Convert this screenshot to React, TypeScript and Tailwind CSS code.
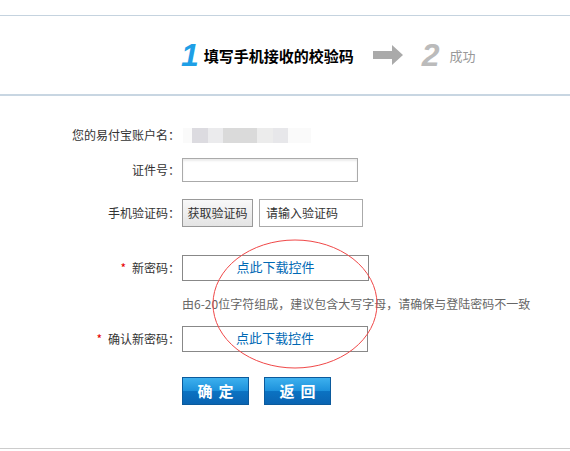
import React from "react";

const cjk = { fontFamily: '"Noto Sans CJK SC", "Noto Sans", sans-serif' };

function Label({ children, star }: { children: React.ReactNode; star?: boolean }) {
  return (
    <div className="w-[180px] shrink-0 text-right text-[12px] leading-[16px] text-[#333]">
      {star && <span className="mr-[6px] text-[#e60000]">*</span>}
      {children}
    </div>
  );
}

export default function App() {
  return (
    <div className="relative h-[451px] w-[570px] overflow-hidden bg-white" style={cjk}>
      <div className="h-[15px]" />
      <div className="h-px bg-[#c5d3df]" />
      {/* steps header */}
      <div className="flex h-[78px] items-center pl-[181px]">
        <span
          className="text-[32px] font-bold italic leading-none text-[#1e9fe6]"
          style={{ fontFamily: '"Liberation Sans", Arial, sans-serif' }}
        >
          1
        </span>
        <span className="ml-[5px] text-[15px] font-bold leading-none text-black">填写手机接收的校验码</span>
        <svg className="ml-[19px]" width="31" height="20" viewBox="0 0 31 20">
          <polygon points="0,6 19,6 19,0 30,10 19,20 19,14 0,14" fill="#aaaaaa" />
        </svg>
        <span
          className="ml-[18px] text-[32px] font-bold italic leading-none text-[#bbbbbb]"
          style={{ fontFamily: '"Liberation Sans", Arial, sans-serif' }}
        >
          2
        </span>
        <span className="ml-[10px] text-[13px] leading-none text-[#999]">成功</span>
      </div>
      <div className="h-[2px] bg-[#c8d6e2]" />

      {/* form */}
      <div className="flex flex-col">
        <div className="mt-[27px] flex h-[24px] items-center">
          <Label>您的易付宝账户名：</Label>
          <div className="ml-[3px] flex h-[15px] w-[128px] bg-[#fafafa] pl-[9px]">
            <div className="w-[16px] bg-[#dcdbe0]" />
            <div className="w-[15px] bg-[#ebebed]" />
            <div className="w-[34px] bg-[#dadada]" />
            <div className="w-[16px] bg-[#ececec]" />
            <div className="w-[15px] bg-[#e7e7ea]" />
          </div>
        </div>

        <div className="mt-[11px] flex h-[24px] items-center">
          <Label>证件号：</Label>
          <div className="ml-[2px] h-[24px] w-[176px] border border-[#aaaaaa] bg-white shadow-[inset_0_2px_2px_rgba(0,0,0,0.08)]" />
        </div>

        <div className="mt-[17px] flex h-[28px] items-center">
          <Label>手机验证码：</Label>
          <div className="ml-[2px] flex h-[28px] w-[71px] items-center justify-center border border-[#999] bg-gradient-to-b from-[#f8f8f8] to-[#e4e4e4] text-[12px] text-[#333]">
            获取验证码
          </div>
          <div className="ml-[6px] flex h-[28px] w-[104px] items-center border border-[#aaaaaa] bg-white pl-[6px] text-[12px] text-[#333]">
            请输入验证码
          </div>
        </div>

        <div className="mt-[28px] flex h-[26px] items-center">
          <Label star>新密码：</Label>
          <div className="ml-[2px] h-[26px] w-[187px] border border-[#888] pt-[2px] text-center text-[13px] leading-[18px] text-[#0068b4]">
            点此下载控件
          </div>
        </div>

        <div className="mt-[16px] pl-[182px] text-[12px] leading-[14px] text-[#666]">
          由6-20位字符组成，建议包含大写字母，请确保与登陆密码不一致
        </div>

        <div className="mt-[15px] flex h-[26px] items-center">
          <Label star>确认新密码：</Label>
          <div className="ml-[2px] h-[26px] w-[186px] border border-[#888] pt-[2px] text-center text-[13px] leading-[18px] text-[#0068b4]">
            点此下载控件
          </div>
        </div>

        <div className="mt-[25px] flex h-[28px] pl-[182px]">
          <div className="flex h-[28px] w-[67px] items-center justify-center border border-[#0b5a9c] bg-[linear-gradient(to_bottom,#3db0ee_0%,#1e92dc_48%,#0b72c2_52%,#0a64b2_100%)] text-[15px] font-bold tracking-[6px] text-white">
            <span className="ml-[6px]">确定</span>
          </div>
          <div className="ml-[15px] flex h-[28px] w-[67px] items-center justify-center border border-[#0b5a9c] bg-[linear-gradient(to_bottom,#3db0ee_0%,#1e92dc_48%,#0b72c2_52%,#0a64b2_100%)] text-[15px] font-bold tracking-[6px] text-white">
            <span className="ml-[6px]">返回</span>
          </div>
        </div>

        <div className="mt-[43px] h-px bg-[#cccccc]" />
      </div>

      {/* red annotation ellipse */}
      <svg className="pointer-events-none absolute left-0 top-0" width="570" height="451">
        <ellipse cx="295" cy="304" rx="82" ry="64" fill="none" stroke="#f04848" strokeWidth="1" />
      </svg>
    </div>
  );
}
